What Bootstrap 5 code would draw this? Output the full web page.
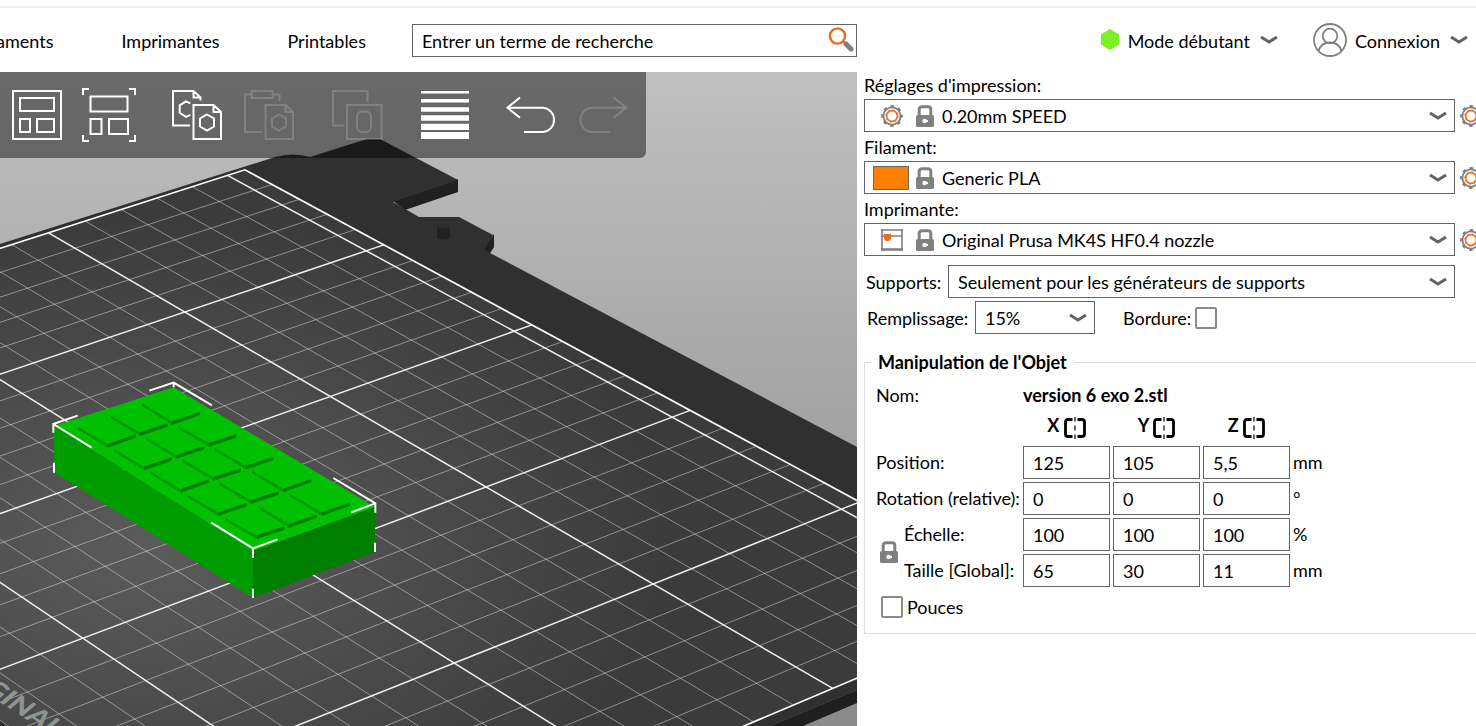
<!DOCTYPE html>
<html lang="fr">
<head>
<meta charset="utf-8">
<meta name="viewport" content="width=device-width, initial-scale=1">
<title>PrusaSlicer</title>
<link href="https://cdn.jsdelivr.net/npm/bootstrap@5.3.0/dist/css/bootstrap.min.css" rel="stylesheet">
<style>
  body { font: 18px/24px Lato, "Noto Sans", sans-serif; color: #000; background: #fff; }
  .app-head { height: 66px; margin-top: 6px; border-top: 2px solid #f0f0f0; }
  .left-side { flex: none; width: 58.06%; }
  .right-side { flex: 1 1 0; min-width: 0; }
  .app-head a { color: #000; text-decoration: none; white-space: nowrap; }
  .plain-btn { border: 0; background: none; padding: 0; color: #000; line-height: 24px; white-space: nowrap; }
  .tab-links { gap: 68px; padding: 2px 46px 0 0; margin-left: -4px; }
  .account { gap: 35px; padding: 0 8px 0 0; }
  .account span { padding: 2px 10px 0 8px; }
  .box { border: 1px solid #646464; border-radius: 0; background-color: #fff; color: #000; height: 33px; font-size: 18px; line-height: 24px; padding: 4px 9px 3px; min-width: 0; }
  select.box { appearance: none; background-image: url("data:image/svg+xml,%3Csvg xmlns='http://www.w3.org/2000/svg' width='18' height='10' fill='none' stroke='%23646464' stroke-width='3'%3E%3Cpath d='M1 2l8 5 8-5'/%3E%3C/svg%3E"); background-repeat: no-repeat; background-position: right 7px center; }
  .search-icon { right: 3px; top: 1px; }
  .viewer { overflow: hidden; }
  .scene { width: 100%; height: 100%; display: block; min-height: 654px; }
  .tools { top: 0; left: 0; height: 86px; gap: 16px; padding: 15px 13px 0 9px; background: rgba(0,0,0,.45); border-radius: 0 0 6px 0; }
  .tools svg { display: block; fill: none; stroke: #fff; stroke-width: 2; }
  .tools button:disabled { opacity: .17; }
  .tools .apart { margin-left: 16px; }
  .settings { padding-left: 7px; }
  .preset-list { gap: 2px; }
  .setting-label { display: block; line-height: 27px; }
  .preset-icons { left: 9px; top: 5px; width: 62px; height: 23px; }
  .swatch { width: 36px; height: 24px; background: #ff8000; border: 1px solid #646464; }
  .preset select { padding-left: 77px; }
  .gear-btn { width: 16px; overflow: hidden; margin-left: 5px; }
  .print-opts { margin: 9px 21px 0 0; gap: 3px; }
  .tick { appearance: none; width: 22px; height: 22px; border: 2px solid #8a8a8a; border-radius: 2px; margin: 0; background: #fff; }
  .support-label { width: 84px; padding-left: 2px; }
  .fill-label { width: 111px; padding-left: 3px; }
  .fill-select { width: 120px; }
  .object-box { border: 1px solid #dcdcdc; border-right: 0; padding: 0 0 14px 11px; margin-top: 15px; }
  .object-box legend { float: none; width: auto; font-size: 18px; line-height: 26px; font-weight: 700; padding: 0 7px; margin: 0 0 0 -5px; }
  .obj { border-collapse: separate; border-spacing: 0; margin-top: 4px; }
  .obj td, .obj th { padding: 0 3px 4px 0; height: 36px; font-weight: 400; white-space: nowrap; }
  .obj .val { padding-bottom: 3px; }
  .obj tr.name-row > * { height: 31px; padding-bottom: 0; }
  .obj .box { width: 87px; display: block; }
  .obj .axis { font-weight: 700; text-align: center; }
  .inch-row { padding: 5px 0 0 5px; }
</style>
</head>
<body class="d-flex flex-column min-vh-100 overflow-hidden">

<svg class="d-none" aria-hidden="true">
  <symbol id="gear" viewBox="0 0 22 22">
    <circle cx="11" cy="11" r="8.6" fill="none" stroke="#808080" stroke-width="1.8"/>
    <circle cx="11" cy="11" r="9.6" fill="none" stroke="#808080" stroke-width="2.6" stroke-dasharray="3.4 4.14" stroke-dashoffset="1.7"/>
    <circle cx="11" cy="11" r="5.4" fill="none" stroke="#ed6b21" stroke-width="1.6"/>
    <circle cx="11" cy="11" r="6.2" fill="none" stroke="#ed6b21" stroke-width="1" stroke-dasharray="1.8 3.07"/>
  </symbol>
  <symbol id="lock" viewBox="0 0 18 22">
    <path d="M3.2 11V4.6Q3.2 1.800 6 1.800h6q2.800 0 2.800 2.800V11" fill="none" stroke="#808080" stroke-width="3"/>
    <rect y="10" width="18" height="12" rx="1.6" fill="#808080"/>
    <path d="M8 16h4" stroke="#fff" stroke-width="2"/><circle cx="8.6" cy="16" r="2.3" fill="#fff"/>
  </symbol>
  <symbol id="printer" viewBox="0 0 22 22">
    <path d="M1 0v22M21 0v22M0 1h22M0 7h22" fill="none" stroke="#808080" stroke-width="1.6"/>
    <path d="M0 20.5h22" stroke="#808080" stroke-width="2.6"/>
    <path d="M3 5h7v5l-2 2H5l-2-2z" fill="#ed6b21"/>
  </symbol>
  <symbol id="chev" viewBox="0 0 18 10"><path d="M1 2l8 5 8-5" fill="none" stroke="#646464" stroke-width="3"/></symbol>
  <symbol id="mirror" viewBox="0 0 22 22">
    <path d="M8.5 2.5H4Q1.5 2.5 1.5 5v12Q1.5 19.5 4 19.5h4.500M13.500 2.500H18q2.500 0 2.500 2.500v12q0 2.500-2.500 2.500h-4.500" fill="none" stroke="#000" stroke-width="2.8"/>
    <path d="M11 0v4.5M11 8.5v5M11 17.5v4.5" stroke="#333" stroke-width="1.5"/>
  </symbol>
</svg>

<header class="app-head d-flex">
  <div class="left-side d-flex align-items-center">
    <nav class="tab-links d-flex flex-shrink-0" aria-label="Onglets">
      <a href="#" aria-label="Filaments">aments</a><a href="#">Imprimantes</a><a href="#">Printables</a>
    </nav>
    <form class="position-relative flex-grow-1">
      <input class="box w-100 d-block" type="text" aria-label="Recherche" value="Entrer un terme de recherche">
      <svg class="search-icon position-absolute" width="26" height="28" viewBox="0 0 26 28" aria-hidden="true"><path d="M18 19l5 5" stroke="#808080" stroke-width="5" stroke-linecap="round"/><path d="M14 15l4 4" stroke="#808080" stroke-width="2"/><circle cx="9.5" cy="11" r="7.6" fill="#fff" stroke="#ed6b21" stroke-width="2.4"/></svg>
    </form>
  </div>
  <div class="right-side account d-flex align-items-center justify-content-end">
    <button class="plain-btn d-flex align-items-center" type="button">
      <svg width="20" height="22" viewBox="0 0 20 22" aria-hidden="true"><path d="M10 0l9 5.5v10L10 21l-9-5.500v-10z" fill="#7cf125"/></svg>
      <span>Mode débutant</span><svg width="18" height="10" aria-hidden="true"><use href="#chev"/></svg>
    </button>
    <button class="plain-btn d-flex align-items-center" type="button">
      <svg width="34" height="34" viewBox="0 0 34 34" fill="none" stroke="#808080" stroke-width="1.8" aria-hidden="true"><circle cx="17" cy="17" r="16"/><circle cx="17" cy="13" r="7.3"/><path d="M5.5 28q2.500-8.500 11.500-8.500T28.500 28"/></svg>
      <span>Connexion</span><svg width="18" height="10" aria-hidden="true"><use href="#chev"/></svg>
    </button>
  </div>
</header>

<main class="d-flex flex-grow-1">
  <section class="left-side viewer position-relative" aria-label="Vue 3D">
    <svg class="scene" viewBox="0 72 857 654" preserveAspectRatio="xMinYMin slice">
      <defs>
        <linearGradient id="sky" x1="0" y1="0" x2="0" y2="1"><stop offset="0" stop-color="#c0c0c0"/><stop offset="1" stop-color="#8b8b8b"/></linearGradient>
        <radialGradient id="sheetFill" gradientUnits="userSpaceOnUse" cx="0" cy="0" r="1" gradientTransform="translate(150 545) scale(520 330)"><stop offset="0" stop-color="#5b5b5b"/><stop offset=".35" stop-color="#515151"/><stop offset="1" stop-color="#3b3b3b"/></radialGradient>
      </defs>
      <rect y="72" width="857" height="654" fill="url(#sky)"/>
      <path d="M393 201L458 179V192L405 210ZM494 234V247L489 255L482 250Z" fill="#202020"/>
      <path d="M0 244L275 157Q293 152 310 157L367 139H380L458 180L393 202L419 217H459L493 235L484 250L490 253L857 447V690L770 726H0Z" fill="#303030"/>
      <path d="M770 726L857 690V703L803 726Z" fill="#1f1f1f"/>
      <path d="M437 226V238Q444 241 450 238V226Z" fill="#222"/><ellipse cx="443.5" cy="226.5" rx="6.5" ry="2" fill="#2c2c2c"/>
      <g id="bed"></g>
      <text transform="matrix(.85 .55 -.7 .6 -19 690)" font-family="Lato, sans-serif" font-weight="900" font-size="28" fill="#8e9492">GINAL</text>
      <g id="model" transform="translate(0 370) scale(.33333)">
        <path d="M162 168L521 52L1125 411L759 543Z" fill="#00c000"/>
        <path d="M162 168L759 543V684L162 306Z" fill="#009c00"/>
        <path d="M759 543L1125 411V546L759 684Z" fill="#007e00"/>
        <g id="tiles"></g>
        <path d="M448 62L521 38L636 106M521 38V52M160 188V162L233 137M160 162L275 233M162 278V308M1000 324L1126 400V428M1054 427L1126 400M1125 518V546M634 458L759 535L833 508M759 535V564M759 656V684" fill="none" stroke="#fff" stroke-width="6"/>
      </g>
    </svg>

    <div class="tools position-absolute d-flex align-items-start" role="toolbar" aria-label="Outils">
      <button class="plain-btn" type="button" aria-label="Agencer"><svg width="56" height="56" viewBox="9 15 56 56"><path d="M13 19h48v48H13zM20 26h34v13H20zM20 47h10v13H20zM37 47h17v13H37z"/></svg></button>
      <button class="plain-btn" type="button" aria-label="Agencer le plateau"><svg width="56" height="56" viewBox="81 15 56 56"><path d="M90.5 24.5h37v15h-37zM90.500 47h11v15h-11zM109 47h19v15h-19z"/><path d="M83 23v-6h6M129 17h6v6M135 63v6h-6M89 69h-6v-6"/></svg></button>
      <button class="plain-btn apart" type="button" aria-label="Copier"><svg width="56" height="56" viewBox="169 15 56 56"><path d="M190 53.500h-17V19h20.500l7 6.500v3M193.500 19v6.500h7M190.300 31.300l-4.300-2-6.300 4v7.500l6.300 4 4.300-2M193.500 33h20l7.500 7v27h-27.500zM213.500 33v7h7.500M207 42.500l7 4v8l-7 4-7-4v-8z"/></svg></button>
      <button class="plain-btn" type="button" aria-label="Coller" disabled><svg width="56" height="56" viewBox="241 15 56 56"><path d="M251.500 22.500H245V60h17.500M273.500 22.500h6V29M251.700 19h21v7h-21zM265.500 33h20l7.500 7v27h-27.500zM285.500 33v7h7.500M279 42.500l7 4v8l-7 4-7-4v-8z"/></svg></button>
      <button class="plain-btn apart" type="button" aria-label="Définir les instances" disabled><svg width="56" height="56" viewBox="329 15 56 56"><path d="M344.500 53.500H333V19h34.500v11M347 33h34.500v34H347z"/><rect x="357" y="39.5" width="14" height="20.5" rx="5"/></svg></button>
      <button class="plain-btn apart" type="button" aria-label="Hauteur de couche variable"><svg width="56" height="56" viewBox="417 15 56 56"><path style="stroke:none;fill:#fff" d="M421 19h48v2.500h-48zM421 27h48v3.500h-48zM421 35.300h48v4.500h-48zM421 43.300h48v5.500h-48zM421 51.700h48v6.200h-48zM421 60h48v7h-48z"/></svg></button>
      <button class="plain-btn apart" type="button" aria-label="Annuler"><svg width="56" height="56" viewBox="505 15 56 56"><path d="M520 25.500l-12.500 10.200 12.500 10M507.500 35.700H543a12.200 12.200 0 0 1 0 24.300h-19"/></svg></button>
      <button class="plain-btn" type="button" aria-label="Rétablir" disabled><svg width="56" height="56" viewBox="577 15 56 56"><path d="M613.500 25.500L626.500 35.700l-13 10M626.500 35.700H591.500a12.200 12.200 0 0 0 0 24.300H610"/></svg></button>
    </div>
  </section>

  <section class="right-side settings" aria-label="Réglages">
    <div class="d-flex flex-column preset-list">
      <div class="preset">
        <label class="setting-label" for="p-print">Réglages d'impression:</label>
        <div class="d-flex align-items-center">
          <div class="position-relative flex-grow-1">
            <select class="box w-100 d-block" id="p-print"><option>0.20mm SPEED</option></select>
            <span class="preset-icons position-absolute d-flex align-items-center pe-none"><svg class="ms-2" width="22" height="22"><use href="#gear"/></svg><svg class="ms-auto" width="20" height="22"><use href="#lock"/></svg></span>
          </div>
          <button class="plain-btn gear-btn" type="button" aria-label="Modifier les réglages"><svg class="d-block" width="22" height="22"><use href="#gear"/></svg></button>
        </div>
      </div>
      <div class="preset">
        <label class="setting-label" for="p-fil">Filament:</label>
        <div class="d-flex align-items-center">
          <div class="position-relative flex-grow-1">
            <select class="box w-100 d-block" id="p-fil"><option>Generic PLA</option></select>
            <span class="preset-icons position-absolute d-flex align-items-center pe-none"><span class="swatch"></span><svg class="ms-auto" width="20" height="22"><use href="#lock"/></svg></span>
          </div>
          <button class="plain-btn gear-btn" type="button" aria-label="Modifier le filament"><svg class="d-block" width="22" height="22"><use href="#gear"/></svg></button>
        </div>
      </div>
      <div class="preset">
        <label class="setting-label" for="p-imp">Imprimante:</label>
        <div class="d-flex align-items-center">
          <div class="position-relative flex-grow-1">
            <select class="box w-100 d-block" id="p-imp"><option>Original Prusa MK4S HF0.4 nozzle</option></select>
            <span class="preset-icons position-absolute d-flex align-items-center pe-none"><svg class="ms-2" width="22" height="22"><use href="#printer"/></svg><svg class="ms-auto" width="20" height="22"><use href="#lock"/></svg></span>
          </div>
          <button class="plain-btn gear-btn" type="button" aria-label="Modifier l'imprimante"><svg class="d-block" width="22" height="22"><use href="#gear"/></svg></button>
        </div>
      </div>
    </div>

    <div class="print-opts d-flex flex-column">
      <div class="d-flex align-items-center">
        <label class="support-label flex-shrink-0" for="o-sup">Supports:</label>
        <select class="box flex-grow-1" id="o-sup"><option>Seulement pour les générateurs de supports</option></select>
      </div>
      <div class="d-flex align-items-center">
        <label class="fill-label flex-shrink-0" for="o-fill">Remplissage:</label>
        <select class="box fill-select" id="o-fill"><option>15%</option></select>
        <label class="ms-4 ps-1 me-1" for="o-brim">Bordure:</label>
        <input class="tick" type="checkbox" id="o-brim">
      </div>
    </div>

    <fieldset class="object-box">
      <legend>Manipulation de l'Objet</legend>
      <table class="obj">
        <colgroup><col style="width:28px"><col style="width:119px"></colgroup>
        <tbody>
        <tr class="name-row"><td colspan="2">Nom:</td><td colspan="4"><b>version 6 exo 2.stl</b></td></tr>
        <tr><td colspan="2"></td>
          <th class="axis" scope="col">X <button class="plain-btn" type="button" aria-label="Miroir X"><svg width="22" height="22"><use href="#mirror"/></svg></button></th>
          <th class="axis" scope="col">Y <button class="plain-btn" type="button" aria-label="Miroir Y"><svg width="22" height="22"><use href="#mirror"/></svg></button></th>
          <th class="axis" scope="col">Z <button class="plain-btn" type="button" aria-label="Miroir Z"><svg width="22" height="22"><use href="#mirror"/></svg></button></th><td></td></tr>
        <tr><th colspan="2" scope="row">Position:</th><td class="val"><input class="box" aria-label="Position X" value="125"></td><td class="val"><input class="box" aria-label="Position Y" value="105"></td><td class="val"><input class="box" aria-label="Position Z" value="5,5"></td><td>mm</td></tr>
        <tr><th colspan="2" scope="row">Rotation (relative):</th><td class="val"><input class="box" aria-label="Rotation X" value="0"></td><td class="val"><input class="box" aria-label="Rotation Y" value="0"></td><td class="val"><input class="box" aria-label="Rotation Z" value="0"></td><td>°</td></tr>
        <tr><td rowspan="2" class="ps-1"><button class="plain-btn d-block" type="button" aria-label="Verrouiller les proportions"><svg class="d-block" width="18" height="22"><use href="#lock"/></svg></button></td><th scope="row">Échelle:</th><td class="val"><input class="box" aria-label="Échelle X" value="100"></td><td class="val"><input class="box" aria-label="Échelle Y" value="100"></td><td class="val"><input class="box" aria-label="Échelle Z" value="100"></td><td>%</td></tr>
        <tr><th scope="row">Taille [Global]:</th><td class="val"><input class="box" aria-label="Taille X" value="65"></td><td class="val"><input class="box" aria-label="Taille Y" value="30"></td><td class="val"><input class="box" aria-label="Taille Z" value="11"></td><td>mm</td></tr>
        </tbody>
      </table>
      <div class="inch-row d-flex align-items-center">
        <input class="tick" type="checkbox" id="o-inch"><label class="ms-1" for="o-inch">Pouces</label>
      </div>
    </fieldset>
  </section>
</main>

<script src="https://cdn.jsdelivr.net/npm/bootstrap@5.3.0/dist/js/bootstrap.bundle.min.js"></script>
<script>
  // Bed perspective: [u, v, x, y] anchors, u and v counted in 10 mm cells.
  const anchors = [[0,0,227.7,175],[0,5,48.5,233],[5,0,366.7,250.7],[5,5,185,312],[10,0,511.7,331.3],[10,5,330.3,396.7],
    [15,0,673,417.3],[15,5,486.3,487.3],[20,0,841.7,509.3],[20,5,653.3,584],[25,5,832.3,688],[20,10,454.7,663],[15,15,82.3,638]];
  const N = Array.from({length: 8}, () => Array(9).fill(0));
  const addRow = (r, t) => { for (let i = 0; i < 8; i++) { for (let j = 0; j < 8; j++) N[i][j] += r[i] * r[j]; N[i][8] += r[i] * t; } };
  for (const [u, v, x, y] of anchors) {
    addRow([u, v, 1, 0, 0, 0, -u * x, -v * x], x);
    addRow([0, 0, 0, u, v, 1, -u * y, -v * y], y);
  }
  for (let c = 0; c < 8; c++) {
    let p = c;
    for (let r = c + 1; r < 8; r++) if (Math.abs(N[r][c]) > Math.abs(N[p][c])) p = r;
    [N[c], N[p]] = [N[p], N[c]];
    for (let r = 0; r < 8; r++) if (r !== c) {
      const f = N[r][c] / N[c][c];
      for (let k = c; k < 9; k++) N[r][k] -= f * N[c][k];
    }
  }
  const h = N.map((r, i) => r[8] / r[i]);
  const pt = (u, v) => { const w = h[6] * u + h[7] * v + 1; return ((h[0] * u + h[1] * v + h[2]) / w).toFixed(1) + ' ' + ((h[3] * u + h[4] * v + h[5]) / w).toFixed(1); };
  const V0 = -0.5, V1 = 18;
  const edge = `M${pt(0, V1)}L${pt(0, V0)}L${pt(25, V0)}L${pt(25, V1)}`;
  let thin = '', bold = '';
  for (let u = 1; u < 25; u++) { const s = `M${pt(u, V0)}L${pt(u, V1)}`; if (u % 5) thin += s; else bold += s; }
  for (let v = 0; v <= V1; v++) { const s = `M${pt(0, v)}L${pt(25, v)}`; if (v % 5) thin += s; else bold += s; }
  document.getElementById('bed').innerHTML =
    `<path d="${edge}Z" fill="url(#sheetFill)"/><path d="${thin}" stroke="#fff" stroke-opacity=".42" fill="none"/>` +
    `<path d="${bold}" stroke="#fff" stroke-opacity=".92" stroke-width="1.5" fill="none"/><path d="${edge}" stroke="#fff" stroke-width="1.7" fill="none"/>`;

  // Raised keys: left corner, front corner, right corner of each.
  const keys = [[235,170,323,222,407,193],[331,136,420,187,503,160],[427,100,516,154,599,126],
    [342,236,432,290,515,262],[439,202,529,255,613,228],[535,168,627,219,709,193],
    [451,304,543,357,626,328],[548,268,640,321,723,295],[645,234,738,287,821,260],
    [562,373,655,427,740,399],[658,336,753,391,836,364],[756,301,850,356,934,327],
    [676,444,770,496,854,469],[772,405,867,462,950,434],[869,370,965,427,1049,398]];
  document.getElementById('tiles').innerHTML = keys.map(([a, b, c, d, e, f]) =>
    `<path fill="#009c00" d="M${a} ${b}L${c} ${d}v11L${a} ${b + 9}Z"/><path fill="#007e00" d="M${c} ${d}L${e} ${f}v10L${c} ${d + 11}Z"/>`).join('');
</script>
</body>
</html>
